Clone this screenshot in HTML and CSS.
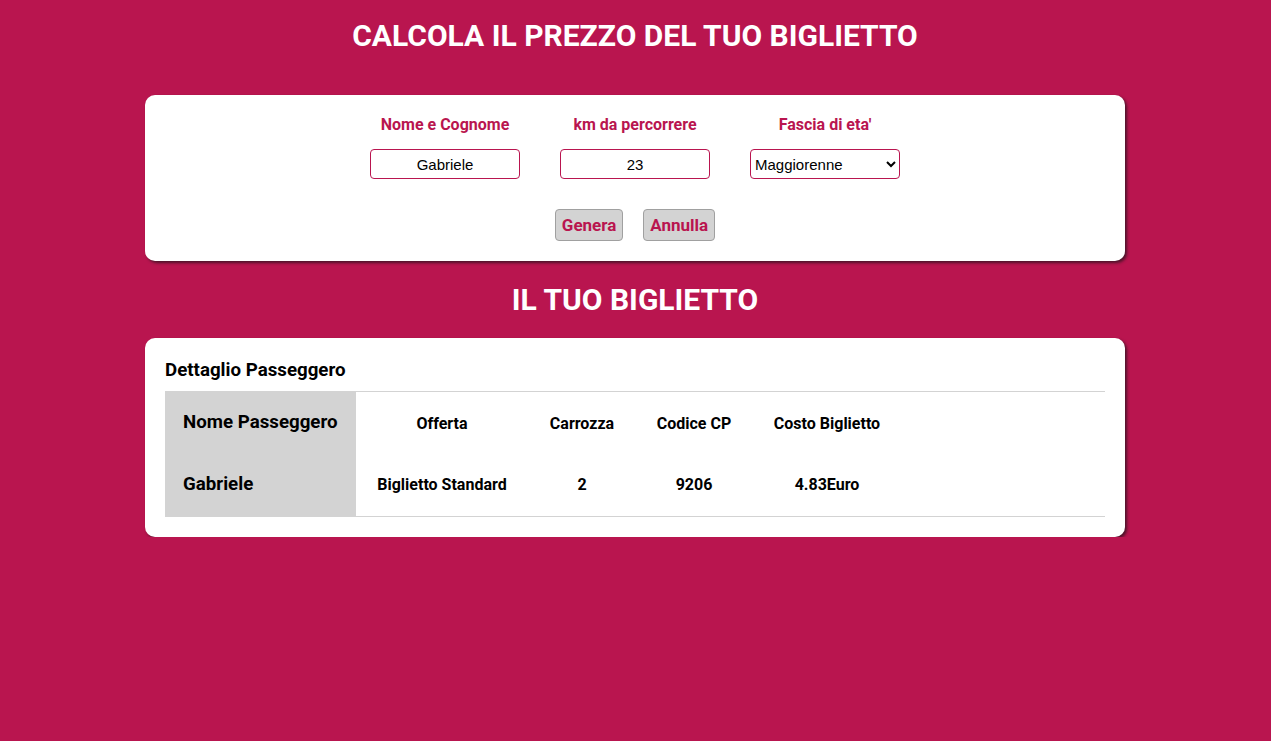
FILE: index.html
```html
<!DOCTYPE html>
<html lang="it">
<head>
<meta charset="utf-8">
<title>Calcola il prezzo del tuo biglietto</title>
<link rel="stylesheet" href="styles.css">
</head>
<body>
<h1 class="title title-top">CALCOLA IL PREZZO DEL TUO BIGLIETTO</h1>
<section class="card form-card">
  <div class="fields">
    <div class="field">
      <label class="field-label" for="nome">Nome e Cognome</label>
      <input class="field-input" id="nome" type="text" value="Gabriele">
    </div>
    <div class="field">
      <label class="field-label" for="km">km da percorrere</label>
      <input class="field-input" id="km" type="text" value="23">
    </div>
    <div class="field">
      <label class="field-label" for="eta">Fascia di eta'</label>
      <select class="field-select" id="eta">
        <option>Maggiorenne</option>
        <option>Minorenne</option>
        <option>Over 65</option>
      </select>
    </div>
  </div>
  <div class="actions">
    <button class="btn">Genera</button>
    <button class="btn">Annulla</button>
  </div>
</section>
<h1 class="title title-mid">IL TUO BIGLIETTO</h1>
<section class="card ticket-card">
  <h2 class="ticket-heading">Dettaglio Passeggero</h2>
  <div class="ticket">
    <div class="cell name-cell name-head">Nome Passeggero</div>
    <div class="cell head">Offerta</div>
    <div class="cell head">Carrozza</div>
    <div class="cell head">Codice CP</div>
    <div class="cell head">Costo Biglietto</div>
    <div class="cell"></div>
    <div class="cell name-cell name-val">Gabriele</div>
    <div class="cell val">Biglietto Standard</div>
    <div class="cell val">2</div>
    <div class="cell val">9206</div>
    <div class="cell val">4.83Euro</div>
    <div class="cell"></div>
  </div>
</section>
</body>
</html>
```
FILE: styles.css
```css
* { box-sizing: border-box; }

html, body {
  background: #b9154f;
}

body {
  margin: 0;
  padding: 0 146px 0 145px;
  font-family: Roboto, "Liberation Sans", Arial, sans-serif;
  color: #000;
}

.title {
  margin: 0;
  color: #fff;
  font-weight: 700;
  font-size: 30px;
  line-height: 36px;
  text-align: center;
}

.title-top {
  padding-top: 18px;
  padding-bottom: 41px;
}

.title-mid {
  padding-top: 21px;
  padding-bottom: 20px;
}

.card {
  background: #fff;
  border-radius: 10px;
  box-shadow: 2px 2px 3px rgba(40, 20, 30, 0.75);
  padding: 20px;
}

.fields {
  display: flex;
  justify-content: center;
  gap: 40px;
}

.field {
  display: flex;
  flex-direction: column;
  align-items: center;
  width: 150px;
}

.field-label {
  color: #b9154f;
  font-weight: 700;
  font-size: 16px;
  line-height: 19px;
  margin-bottom: 15px;
  white-space: nowrap;
}

.field-input,
.field-select {
  width: 150px;
  height: 30px;
  border: 1px solid #b9154f;
  border-radius: 4px;
  font-family: "Liberation Sans", Arial, sans-serif;
  font-size: 15px;
  color: #000;
  background: #fff;
}

.field-input {
  text-align: center;
  padding: 0 4px;
}

.field-select {
  padding: 0;
}

.actions {
  display: flex;
  justify-content: center;
  gap: 20px;
  margin-top: 30px;
}

.btn {
  height: 32px;
  padding: 0 6px;
  background: #d3d3d3;
  border: 1px solid #a0a0a0;
  border-radius: 4px;
  color: #b9154f;
  font-family: Roboto, "Liberation Sans", Arial, sans-serif;
  font-weight: 700;
  font-size: 17px;
}

.ticket-heading {
  margin: 0 0 10px;
  padding-top: 1px;
  font-size: 18.72px;
  line-height: 22px;
  font-weight: 700;
}

.ticket {
  display: grid;
  grid-template-columns: 191px 172px 108px 116px 150px 1fr;
  grid-auto-rows: 62px;
  border-top: 1px solid #d3d3d3;
  border-bottom: 1px solid #d3d3d3;
}

.cell {
  display: flex;
  align-items: center;
  justify-content: center;
  font-weight: 700;
  font-size: 16px;
}

.name-cell {
  background: #d3d3d3;
  justify-content: flex-start;
  padding-left: 18px;
  font-size: 18.72px;
}

.head {
  padding-top: 1px;
}

.name-head {
  padding-bottom: 2px;
}

.val {
  padding-bottom: 2px;
}

.name-val {
  padding-bottom: 2px;
}
```
